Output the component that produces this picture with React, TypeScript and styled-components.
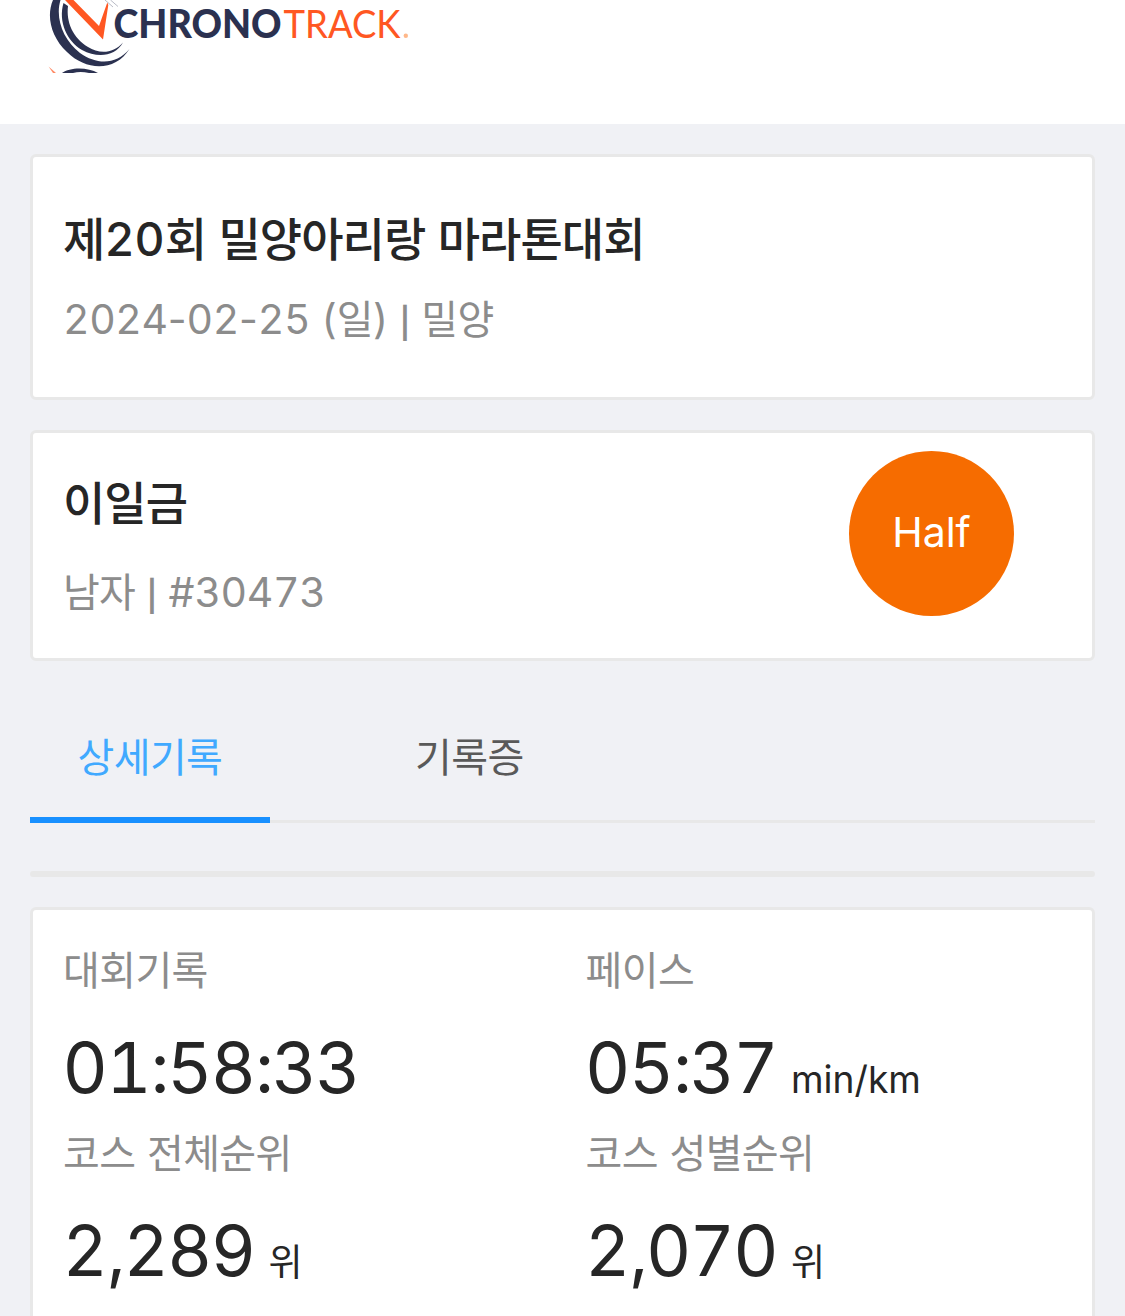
import React from "react";
import styled, { createGlobalStyle } from "styled-components";

const GlobalStyle = createGlobalStyle`
  * { box-sizing: border-box; }
  body {
    margin: 0;
    background: #f0f1f5;
    color: #262626;
    font-family: Inter, "Noto Sans CJK KR", sans-serif;
  }
`;

const Page = styled.div`
  height: 1316px;
  overflow: hidden;
`;

const Header = styled.header`
  height: 124px;
  padding-left: 48px;
  background: #fff;
`;

const Logo = styled.svg`
  display: block;
`;

const Content = styled.main`
  display: flex;
  flex-direction: column;
  padding: 30px 30px 0;
`;

const Card = styled.section<{ $height: number; $top: number }>`
  flex: none;
  height: ${(p) => p.$height}px;
  padding: ${(p) => p.$top}px 30px 0;
  border: 3px solid #e8e8e8;
  border-radius: 6px;
  background: #fff;
`;

const EventCard = styled(Card)`
  margin-bottom: 30px;
`;

const RunnerCard = styled(Card)`
  display: flex;
  justify-content: space-between;
  padding-right: 78px;
`;

const RunnerInfo = styled.div`
  padding-top: 34px;
`;

const Title = styled.h1`
  margin: 0;
  font-size: 46.5px;
  line-height: 72px;
  font-weight: 500;
  white-space: pre;
`;

const Sub = styled.p<{ $gap?: number }>`
  margin: ${(p) => p.$gap ?? 0}px 0 0;
  color: #8c8c8c;
  font-size: 41px;
  line-height: 63px;
  white-space: pre;
`;

const Hangul = styled.span<{ $size: number; $track: number }>`
  font-family: "Noto Sans CJK KR", sans-serif;
  font-size: ${(p) => p.$size}px;
  letter-spacing: ${(p) => p.$track}px;
  line-height: 1;
`;

const Digits = styled.span<{ $track: number }>`
  font-variant-numeric: tabular-nums;
  letter-spacing: ${(p) => p.$track}px;
`;

const Bar = styled.span`
  margin-right: -0.5px;
  font-size: 0.74em;
  font-weight: 600;
  line-height: 1;
`;

const Badge = styled.div`
  display: flex;
  align-items: center;
  justify-content: center;
  width: 165px;
  height: 165px;
  margin-top: 18px;
  padding-bottom: 3px;
  border-radius: 50%;
  background: #f66c00;
  color: #fff;
  font-size: 41px;
`;

const Tabs = styled.nav`
  display: flex;
  flex: none;
  gap: 96px;
  height: 129px;
  margin: 33px 0 48px;
  border-bottom: 3px solid #e8e8e8;
`;

const Tab = styled.button<{ $active?: boolean }>`
  height: 129px;
  padding: 22px 47.7px 0 ${(p) => (p.$active ? 47.5 : 49)}px;
  border: 0;
  border-bottom: 6px solid ${(p) => (p.$active ? "#1890ff" : "transparent")};
  background: none;
  color: ${(p) => (p.$active ? "#40a9ff" : "#595959")};
  font: inherit;
  line-height: 63px;
`;

const Divider = styled.div`
  flex: none;
  height: 6px;
  margin-bottom: 30px;
  border-radius: 6px;
  background: #e8e8e8;
`;

const Stats = styled.div`
  display: grid;
  grid-template-columns: 522.5px 1fr;
  grid-auto-rows: 183px;
`;

const StatValue = styled.div`
  margin: 13px 0 0 -0.5px;
  font-size: 70px;
  line-height: 106px;
  letter-spacing: -3px;
  white-space: pre;
`;

const Unit = styled.span`
  margin-left: 14px;
  font-size: 37.2px;
  letter-spacing: 0;
`;

type MixedProps = { text: string; size?: number; track?: number; digits?: number };

/* Sets Hangul, figures and the separator bar each in its own style. */
function Mixed({ text, size = 40, track = -0.6, digits = -0.4 }: MixedProps) {
  return (
    <>
      {text.split(/([가-힣]+|\d+|\|)/).map((part, i) => {
        if (/[가-힣]/.test(part)) return <Hangul key={i} $size={size} $track={track}>{part}</Hangul>;
        if (/\d/.test(part)) return <Digits key={i} $track={digits}>{part}</Digits>;
        if (part === "|") return <Bar key={i}>|</Bar>;
        return part;
      })}
    </>
  );
}

const stats = [
  { label: "대회기록", value: "01:58:33" },
  { label: "페이스", value: "05:37", unit: "min/km" },
  { label: "코스 전체순위", value: "2,289", unit: "위" },
  { label: "코스 성별순위", value: "2,070", unit: "위" },
];

function ChronoLogo() {
  return (
    <Logo width="364" height="73" viewBox="48 0 364 73">
      <g fill="#2b3150">
        <path d="M53 0C46 16 51 37 67 52C86 71 115 72 129.5 49C116 65 97 65 80 53C63 40 55 18 60.5 0Z" />
        <path d="M63.5 3C58 22 67 41 82 50C97 58 115 57 123 42.5C113 54 99 54 88 47C73 38 66 22 68 6Z" />
        <path d="M62 73C70 67 88 67 98 73H89C83 71.5 78 71.5 73 73Z" />
      </g>
      <path d="M65 0H73.5L99 26L107.3 2.5L108.3 5L103 39.5Z" fill="#ff5722" />
      <path d="M48.5 66.5L56 73H53Z" fill="#ff8a65" />
      <path d="M105 0L113 7M110.5 0L118 6.5" fill="none" stroke="#b9bbc6" strokeWidth="1" />
      <g fontFamily="Lato, sans-serif" fontSize="39">
        <text x="113.5" y="38" textLength="168" lengthAdjust="spacingAndGlyphs" fill="#2b3150" fontWeight="900">
          CHRONO
        </text>
        <text x="283.5" y="38" textLength="117" lengthAdjust="spacingAndGlyphs" fill="#ff5722">
          TRACK
        </text>
      </g>
      <circle cx="405.8" cy="35.8" r="2.2" fill="#ffb88a" />
    </Logo>
  );
}

export default function App() {
  return (
    <Page>
      <GlobalStyle />
      <Header>
        <ChronoLogo />
      </Header>
      <Content>
        <EventCard $height={246} $top={45.5}>
          <Title><Mixed text="제20회 밀양아리랑 마라톤대회" size={46} track={-0.95} digits={0} /></Title>
          <Sub $gap={13}><Mixed text="2024-02-25 (일) | 밀양" /></Sub>
        </EventCard>
        <RunnerCard $height={231} $top={0}>
          <RunnerInfo>
            <Title><Mixed text="이일금" size={46} track={-1} /></Title>
            <Sub $gap={22}><Mixed text="남자 | #30473" track={-0.8} /></Sub>
          </RunnerInfo>
          <Badge>Half</Badge>
        </RunnerCard>
        <Tabs>
          <Tab $active><Mixed text="상세기록" /></Tab>
          <Tab><Mixed text="기록증" /></Tab>
        </Tabs>
        <Divider />
        <Card $height={450} $top={29}>
          <Stats>
            {stats.map((s) => (
              <div key={s.label}>
                <Sub><Mixed text={s.label} /></Sub>
                <StatValue>
                  <Mixed text={s.value} digits={-1.7} />
                  {s.unit && <Unit><Mixed text={s.unit} size={37} /></Unit>}
                </StatValue>
              </div>
            ))}
          </Stats>
        </Card>
      </Content>
    </Page>
  );
}
